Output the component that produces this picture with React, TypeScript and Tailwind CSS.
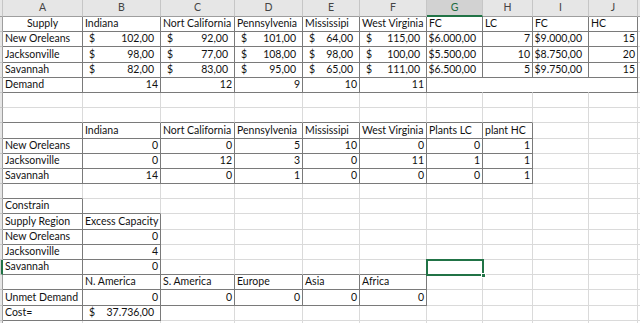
import React from "react";

type Cell = { t: string; k: "l" | "r" | "c" | "cur" | "curR" } | null;

const L = (t: string): Cell => ({ t, k: "l" });
const R = (t: string | number): Cell => ({ t: String(t), k: "r" });
const C = (t: string): Cell => ({ t, k: "c" });
const D = (t: string): Cell => ({ t, k: "cur" });
const DR = (t: string): Cell => ({ t, k: "curR" });
const E: Cell = null;

const HEAD = ["A", "B", "C", "D", "E", "F", "G", "H", "I", "J"];

const rows: Cell[][] = [
  [C("Supply"), L("Indiana"), L("Nort California"), L("Pennsylvenia"), L("Mississipi"), L("West Virginia"), L("FC"), L("LC"), L("FC"), L("HC")],
  [L("New Oreleans"), D("102,00"), D("92,00"), D("101,00"), D("64,00"), D("115,00"), DR("$6.000,00"), R(7), DR("$9.000,00"), R(15)],
  [L("Jacksonville"), D("98,00"), D("77,00"), D("108,00"), D("98,00"), D("100,00"), DR("$5.500,00"), R(10), DR("$8.750,00"), R(20)],
  [L("Savannah"), D("82,00"), D("83,00"), D("95,00"), D("65,00"), D("111,00"), DR("$6.500,00"), R(5), DR("$9.750,00"), R(15)],
  [L("Demand"), R(14), R(12), R(9), R(10), R(11), E, E, E, E],
  [E, E, E, E, E, E, E, E, E, E],
  [E, E, E, E, E, E, E, E, E, E],
  [E, L("Indiana"), L("Nort California"), L("Pennsylvenia"), L("Mississipi"), L("West Virginia"), L("Plants LC"), L("plant HC"), E, E],
  [L("New Oreleans"), R(0), R(0), R(5), R(10), R(0), R(0), R(1), E, E],
  [L("Jacksonville"), R(0), R(12), R(3), R(0), R(11), R(1), R(1), E, E],
  [L("Savannah"), R(14), R(0), R(1), R(0), R(0), R(0), R(1), E, E],
  [E, E, E, E, E, E, E, E, E, E],
  [L("Constrain"), E, E, E, E, E, E, E, E, E],
  [L("Supply Region"), L("Excess Capacity"), E, E, E, E, E, E, E, E],
  [L("New Oreleans"), R(0), E, E, E, E, E, E, E, E],
  [L("Jacksonville"), R(4), E, E, E, E, E, E, E, E],
  [L("Savannah"), R(0), E, E, E, E, E, E, E, E],
  [E, L("N. America"), L("S. America"), L("Europe"), L("Asia"), L("Africa"), E, E, E, E],
  [L("Unmet Demand"), R(0), R(0), R(0), R(0), R(0), E, E, E, E],
  [L("Cost="), D("37.736,00"), E, E, E, E, E, E, E, E],
  [E, E, E, E, E, E, E, E, E, E],
];

function bordered(r: number, c: number): boolean {
  if (c < 0 || c > 9) return false;
  if (r >= 1 && r <= 5) return true;
  if (r >= 8 && r <= 11) return c <= 7;
  if (r === 13) return c === 0;
  if (r >= 14 && r <= 17) return c <= 1;
  if (r === 18) return c >= 1 && c <= 5;
  if (r === 19) return c <= 5;
  if (r === 20) return c <= 1;
  return false;
}

function noRight(r: number, c: number) {
  return r === 5 && c >= 6 && c <= 8;
}

function CellView({ cell }: { cell: Cell }) {
  if (!cell) return null;
  if (cell.k === "cur") {
    return (
      <div className="flex h-full items-end justify-between pb-[1px] pl-[6px] pr-[6px] leading-[13px]">
        <span>$</span>
        <span>{cell.t}</span>
      </div>
    );
  }
  if (cell.k === "curR") {
    return (
      <div className="flex h-full items-end justify-end pb-[1px] pr-[6px] leading-[13px]">
        <span>{cell.t}</span>
      </div>
    );
  }
  if (cell.k === "r") {
    return (
      <div className="flex h-full items-end justify-end pb-[1px] pr-[2px] leading-[13px]">
        <span>{cell.t}</span>
      </div>
    );
  }
  if (cell.k === "c") {
    return (
      <div className="flex h-full items-end justify-center pb-[1px] leading-[13px]">
        <span>{cell.t}</span>
      </div>
    );
  }
  return (
    <div className="flex h-full items-end justify-start pb-[1px] pl-[2px] leading-[13px]">
      <span>{cell.t}</span>
    </div>
  );
}

export default function App() {
  const out: React.ReactNode[] = [];

  out.push(
    <div key="corner" className="border-b border-r border-b-[#9e9e9e] border-r-[#c6c6c6] bg-[#e6e6e6]" />
  );
  HEAD.forEach((h) => {
    const sel = h === "G";
    out.push(
      <div
        key={"h" + h}
        className={
          sel
            ? "flex items-center justify-center border-b-2 border-r border-b-[#217346] border-r-[#c6c6c6] bg-[#d2d2d2] pt-[1px] text-[#1e6b3f]"
            : "flex items-center justify-center border-b border-r border-b-[#9e9e9e] border-r-[#c6c6c6] bg-[#e6e6e6] text-[#444444]"
        }
      >
        {h}
      </div>
    );
  });
  out.push(<div key="hK" className="border-b border-b-[#9e9e9e] bg-[#e6e6e6]" />);

  rows.forEach((row, ri) => {
    const r = ri + 1;
    out.push(
      <div
        key={"s" + r}
        className={
          r === 17
            ? "border-r-2 border-b border-r-[#217346] border-b-[#c6c6c6] bg-[#d2d2d2]"
            : "border-r border-b border-r-[#9e9e9e] border-b-[#c6c6c6] bg-[#e6e6e6]"
        }
      />
    );
    row.forEach((cell, c) => {
      const rightDark = bordered(r, c) || bordered(r, c + 1);
      const bottomDark = bordered(r, c) || bordered(r + 1, c);
      const nr = noRight(r, c);
      const rc = nr ? "border-r-white" : rightDark ? "border-r-[#7a7a7a]" : "border-r-[#dadada]";
      const bc = bottomDark ? "border-b-[#7a7a7a]" : "border-b-[#dadada]";
      out.push(
        <div key={r + "-" + c} className={"overflow-hidden whitespace-nowrap border-r border-b bg-white " + rc + " " + bc}>
          <CellView cell={cell} />
        </div>
      );
    });
    out.push(<div key={"k" + r} className="border-b border-b-[#dadada] bg-white" />);
  });

  return (
    <div className="relative h-[323px] w-[640px] overflow-hidden bg-white text-[10.5px] text-[#111111] [font-family:Lato,'Liberation_Sans',sans-serif]">
      <div className="grid grid-cols-[3px_80px_78px_74px_68px_57px_67px_56px_50px_56px_49px_2px] grid-rows-[17px_repeat(21,15.2px)]">
        {out}
      </div>
      <div className="absolute left-[426px] top-[258.7px] h-[17px] w-[58px] border-2 border-[#217346]" />
      <div className="absolute left-[481px] top-[272.5px] h-[5px] w-[5px] border border-white bg-[#217346]" />
    </div>
  );
}
